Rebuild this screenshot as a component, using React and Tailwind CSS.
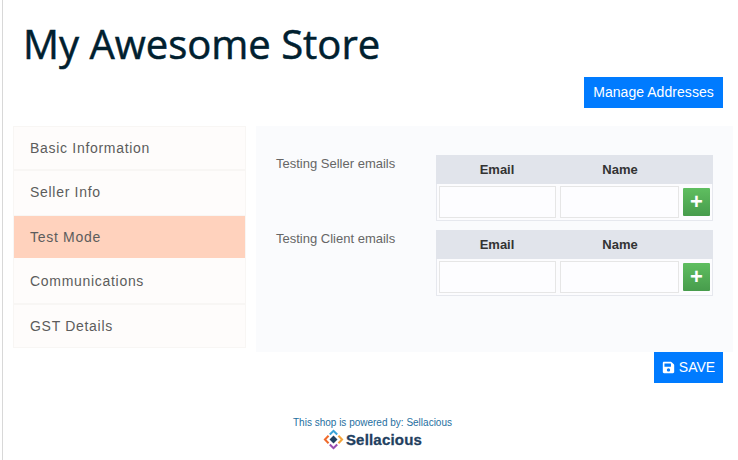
import { FaSave } from "react-icons/fa";

const tabs = [
  { name: "Basic Information", rowClass: "h-[44px] border-b-2 border-[#f8f6f4] bg-[#fefcfb]" },
  { name: "Seller Info", rowClass: "h-[45px] pb-[2px] border-b border-[#f8f6f4] bg-[#fefcfb]" },
  { name: "Test Mode", rowClass: "h-[43px] border-b border-[#fefcfb] bg-[#ffd2bd]" },
  { name: "Communications", rowClass: "h-[46px] border-b-2 border-[#f8f6f4] bg-[#fefcfb]" },
  { name: "GST Details", rowClass: "h-[42px] bg-[#fefcfb]" },
];

const EmailTable = ({ label }) => (
  <div className="flex h-[66px] mb-[9px]">
    <div className="w-[180px] pl-5 pt-[1px] text-[13px] leading-[16px] text-[#666]">{label}</div>
    <div className="w-[277px]">
      <div className="flex h-[29px] items-center bg-[#e1e4eb] text-[13px] font-bold text-[#333]">
        <div className="w-[122px] text-center">Email</div>
        <div className="w-[124px] text-center">Name</div>
      </div>
      <div className="flex h-[37px] items-center gap-[4px] border border-t-0 border-[#e6e8ee] pl-[2px] bg-[#fcfcfe]">
        <div className="h-[32px] w-[117px] border border-[#e6e6e6] bg-[#fdfdff]" />
        <div className="h-[32px] w-[119px] border border-[#e6e6e6] bg-[#fdfdff]" />
        <div className="flex h-[28px] w-[27px] items-center justify-center rounded-[1px] bg-gradient-to-b from-[#5fbe60] to-[#479c4c] text-[22px] font-bold leading-none text-white">+</div>
      </div>
    </div>
  </div>
);

const Logo = () => (
  <svg width="21" height="21" viewBox="0 0 20 20">
    <path d="M10 0.5 L14.2 4.6 L12.8 6 L10 3.2 L7.2 6 L5.8 4.6 Z" fill="#38a3d8" />
    <path d="M4.6 5.8 L6 7.2 L3.2 10 L6 12.8 L4.6 14.2 L0.5 10 Z" fill="#ef6a2c" />
    <path d="M15.4 5.8 L14 7.2 L16.8 10 L14 12.8 L15.4 14.2 L19.5 10 Z" fill="#f2a33a" />
    <path d="M5.8 15.4 L7.2 14 L10 16.8 L12.8 14 L14.2 15.4 L10 19.5 Z" fill="#9a4fb0" />
    <path d="M10 6.2 L13.8 10 L10 13.8 L6.2 10 Z" fill="#1f4060" />
  </svg>
);

export default function App() {
  return (
    <div className="h-[460px] w-[738px] overflow-hidden bg-white font-['Liberation_Sans',sans-serif]">
      <div className="ml-[2px] h-full border-l border-[#d8d8d8] pl-[10px]">
        <h1 className="pl-[10px] pt-[19px] font-['Open_Sans',sans-serif] text-[40px] leading-[50px] text-[#00202f] [-webkit-text-stroke:0.5px_#00202f]">My Awesome Store</h1>
        <div className="mt-[8px] flex justify-end pr-[15px]">
          <button className="h-[31px] w-[139px] bg-[#007bff] text-[14px] tracking-[0.05px] text-white">Manage Addresses</button>
        </div>
        <div className="mt-[18px] flex gap-[10px]">
          <div className="h-[222px] w-[233px] border border-[#f8f6f4]">
            {tabs.map((t) => (
              <div key={t.name} className={`flex items-center pl-[16px] text-[14px] tracking-[0.7px] text-[#5c5c5c] ${t.rowClass}`}>
                {t.name}
              </div>
            ))}
          </div>
          <div className="h-[226px] w-[477px] bg-[#fafbfd] pt-[29px]">
            <EmailTable label="Testing Seller emails" />
            <EmailTable label="Testing Client emails" />
          </div>
        </div>
        <div className="flex justify-end pr-[15px]">
          <button className="flex h-[31px] w-[69px] items-center justify-center gap-[4px] bg-[#007bff] text-[14px] text-white">
            <FaSave size={13} />
            SAVE
          </button>
        </div>
        <div className="mt-[34px] flex flex-col items-center pr-[6px]">
          <div className="text-[10px] leading-[12px] text-[#1f6f9f]">This shop is powered by: Sellacious</div>
          <div className="flex items-center gap-[2px]">
            <Logo />
            <span className="text-[15px] font-bold leading-[20px] tracking-[0.2px] text-[#1f4060] [-webkit-text-stroke:0.3px_#1f4060]">Sellacious</span>
          </div>
        </div>
      </div>
    </div>
  );
}
